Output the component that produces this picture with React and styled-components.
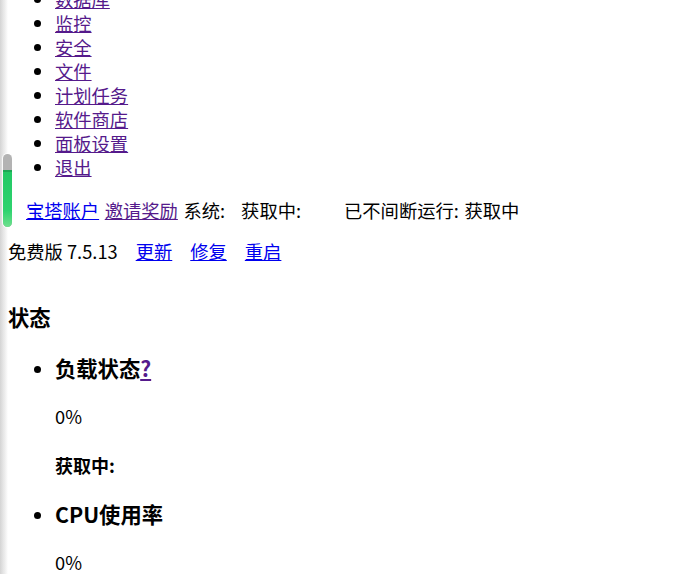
import React from 'react';
import styled, { createGlobalStyle } from 'styled-components';

const GlobalStyle = createGlobalStyle`
  html, body {
    margin: 0;
    padding: 0;
    background: #fff;
    overflow: hidden;
  }
  body {
    margin: 0 8px;
    font-family: "Noto Sans CJK SC", "Noto Sans", sans-serif;
    font-size: 18.3px;
    line-height: 24px;
    color: #000;
  }
`;

const navItems = ['数据库', '监控', '安全', '文件', '计划任务', '软件商店', '面板设置', '退出'];

export default function App() {
    return (
        <>
            <GlobalStyle />
            <EdgeShade />
            <MemBar>
                <MemFill style={{ height: '75%' }} />
            </MemBar>
            <NavList>
                {navItems.map((item) => (
                    <li key={item}><Link visited href="#">{item}</Link></li>
                ))}
            </NavList>
            <InfoRow>
                <Link href="#">宝塔账户</Link> <Link visited href="#">邀请奖励</Link> 系统:
                <Gap w={16}>获取中:</Gap>
                <Gap w={43}>已不间断运行: 获取中</Gap>
            </InfoRow>
            <VersionRow>
                免费版 7.5.13
                <Action href="#">更新</Action>
                <Action href="#">修复</Action>
                <Action href="#">重启</Action>
            </VersionRow>
            <SectionTitle>状态</SectionTitle>
            <StatusList>
                <li>
                    <ItemTitle>负载状态<Link visited href="#">?</Link></ItemTitle>
                    <Value>0%</Value>
                    <SubTitle>获取中:</SubTitle>
                </li>
                <li>
                    <ItemTitle>CPU使用率</ItemTitle>
                    <Value>0%</Value>
                </li>
            </StatusList>
        </>
    );
}

const EdgeShade = styled.div`
    position: fixed;
    left: 0;
    top: 0;
    bottom: 0;
    width: 8px;
    background: linear-gradient(to right, #d4d4d4, rgba(255,255,255,0));
    pointer-events: none;
`

const MemBar = styled.div`
    position: fixed;
    left: 3px;
    top: 154px;
    width: 9px;
    height: 73px;
    border-radius: 5px;
    background: #b3b3b3;
    box-shadow: 0 0 0 1px rgba(255,255,255,0.8);
    display: flex;
    flex-direction: column;
    justify-content: flex-end;
    overflow: hidden;
`

const MemFill = styled.div`
    border-top: 2px solid #1ea655;
    background: linear-gradient(to bottom, #22c864, #2ed36f 70%, #6fe08e);
`

const Link = styled.a`
    color: ${(p) => (p.visited ? '#551a8b' : '#0000ee')};
    text-decoration: underline;
`

const NavList = styled.ul`
    margin: -13px 0 0;
    padding-left: 47px;
`

const InfoRow = styled.div`
    margin-top: 19px;
    padding-left: 18px;
    white-space: nowrap;
    word-spacing: 1.5px;
`

const Gap = styled.span`
    margin-left: ${(p) => p.w}px;
`

const VersionRow = styled.div`
    margin-top: 17px;
    white-space: nowrap;
`

const Action = styled.a`
    color: #0000ee;
    text-decoration: underline;
    margin-left: 18px;
`

const SectionTitle = styled.h3`
    margin: 40px 0 23px;
    font-size: 21.3px;
    line-height: 28px;
    font-weight: bold;
`

const StatusList = styled.ul`
    margin: 0;
    padding-left: 47px;
`

const ItemTitle = styled.h3`
    margin: 23px 0 0;
    font-size: 21.3px;
    line-height: 28px;
    font-weight: bold;
`

const Value = styled.p`
    margin: 22px 0 0;
`

const SubTitle = styled.h4`
    margin: 25px 0 0;
    font-size: 18px;
    line-height: 24px;
    font-weight: bold;
`
